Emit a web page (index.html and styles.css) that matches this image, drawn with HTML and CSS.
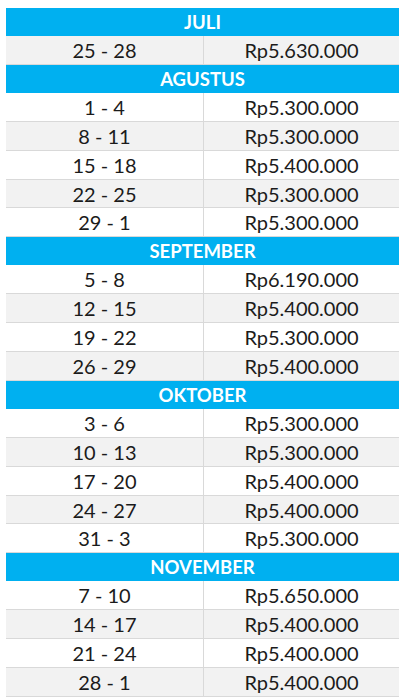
FILE: index.html
```html
<!DOCTYPE html>
<html lang="id">
<head>
<meta charset="utf-8">
<title>Harga</title>
<link rel="stylesheet" href="styles.css">
</head>
<body>
<div class="sheet">
  <div class="month">JULI</div>
  <div class="row alt"><span>25 - 28</span><span>Rp5.630.000</span></div>

  <div class="month">AGUSTUS</div>
  <div class="row"><span>1 - 4</span><span>Rp5.300.000</span></div>
  <div class="row alt"><span>8 - 11</span><span>Rp5.300.000</span></div>
  <div class="row"><span>15 - 18</span><span>Rp5.400.000</span></div>
  <div class="row alt"><span>22 - 25</span><span>Rp5.300.000</span></div>
  <div class="row"><span>29 - 1</span><span>Rp5.300.000</span></div>

  <div class="month">SEPTEMBER</div>
  <div class="row"><span>5 - 8</span><span>Rp6.190.000</span></div>
  <div class="row alt"><span>12 - 15</span><span>Rp5.400.000</span></div>
  <div class="row"><span>19 - 22</span><span>Rp5.300.000</span></div>
  <div class="row alt"><span>26 - 29</span><span>Rp5.400.000</span></div>

  <div class="month">OKTOBER</div>
  <div class="row"><span>3 - 6</span><span>Rp5.300.000</span></div>
  <div class="row alt"><span>10 - 13</span><span>Rp5.300.000</span></div>
  <div class="row"><span>17 - 20</span><span>Rp5.400.000</span></div>
  <div class="row alt"><span>24 - 27</span><span>Rp5.400.000</span></div>
  <div class="row"><span>31 - 3</span><span>Rp5.300.000</span></div>

  <div class="month">NOVEMBER</div>
  <div class="row"><span>7 - 10</span><span>Rp5.650.000</span></div>
  <div class="row alt"><span>14 - 17</span><span>Rp5.400.000</span></div>
  <div class="row"><span>21 - 24</span><span>Rp5.400.000</span></div>
  <div class="row alt"><span>28 - 1</span><span>Rp5.400.000</span></div>
</div>
</body>
</html>
```
FILE: styles.css
```css
html, body {
  margin: 0;
  padding: 0;
  background: #ffffff;
}
body {
  font-family: Lato, "Open Sans", "Liberation Sans", sans-serif;
  color: #1b1b1b;
}
.sheet {
  margin: 8px 0 0 6px;
  width: 393px;
}
.month {
  height: 28px;
  background: #00b0f0;
  color: #ffffff;
  font-weight: 700;
  font-size: 18.5px;
  display: flex;
  align-items: center;
  justify-content: center;
}
.row {
  display: grid;
  grid-template-columns: 198px 1fr;
  height: 28.9px;
  box-sizing: border-box;
  border-bottom: 1px solid #d9d9d9;
  background: #ffffff;
  font-size: 20px;
}
.row.alt {
  background: #f2f2f2;
}
.row > span {
  display: flex;
  align-items: center;
  justify-content: center;
}
.row > span:first-child {
  border-right: 1px solid #d9d9d9;
}
```
